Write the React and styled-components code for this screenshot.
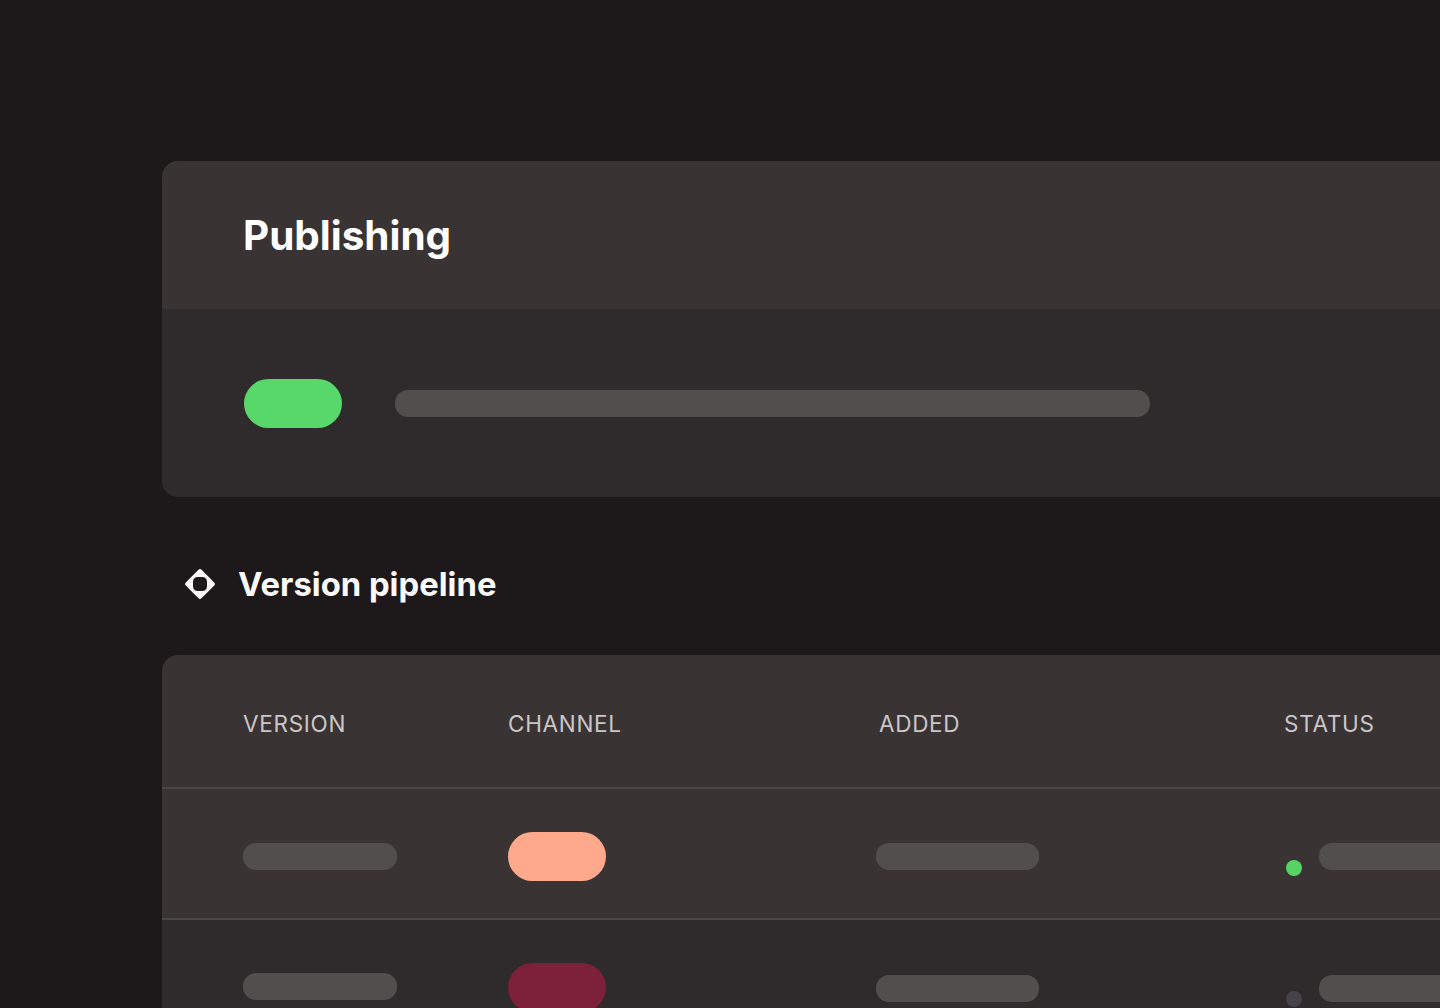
import styled, { createGlobalStyle } from "styled-components";

const GlobalStyle = createGlobalStyle`
  html, body {
    margin: 0;
    background: #1d191a;
    font-family: Inter, "Liberation Sans", sans-serif;
  }
`;

const Page = styled.div`
  box-sizing: border-box;
  height: 1008px;
  overflow: hidden;
  padding: 161px 0 0 162px;
`;

const Card = styled.section`
  width: 1500px;
  border-radius: 16px;
  overflow: hidden;
  background: #2f2a2c;
`;

const CardHeader = styled.header`
  display: flex;
  align-items: center;
  box-sizing: border-box;
  height: 148px;
  padding: 2px 0 0 81px;
  background: #393334;
`;

const Title = styled.h1`
  margin: 0;
  font-size: 40.4px;
  font-weight: 700;
  line-height: 48px;
  color: #ffffff;
`;

const CardBody = styled.div`
  display: flex;
  align-items: center;
  gap: 53px;
  box-sizing: border-box;
  height: 188px;
  padding: 0 0 0 82px;
`;

const Pill = styled.span`
  display: block;
  flex: none;
  width: 98px;
  height: 49px;
  border-radius: 24.5px;
  background: ${(p) => p.$color};
`;

const Skeleton = styled.span`
  display: block;
  flex: none;
  width: ${(p) => p.$width}px;
  height: 27px;
  margin-top: ${(p) => p.$top || 0}px;
  border-radius: 13px;
  background: #534e4e;
`;

const SectionHeading = styled.div`
  display: flex;
  align-items: center;
  gap: 23px;
  box-sizing: border-box;
  height: 158px;
  padding: 16px 0 0 23px;
`;

const SectionTitle = styled.h2`
  margin: 0;
  font-size: 32.8px;
  font-weight: 700;
  line-height: 40px;
  color: #fbf8f9;
`;

const DiamondIcon = styled.svg`
  flex: none;
  width: 30px;
  height: 30px;
  fill: #fbf8f9;
`;

const Table = styled.section`
  width: 1500px;
  border-radius: 16px 16px 0 0;
  overflow: hidden;
  background: #393334;
`;

const HeadRow = styled.div`
  display: grid;
  grid-template-columns: 265px 371px 405px 1fr;
  align-items: center;
  box-sizing: border-box;
  height: 134px;
  padding: 4px 0 0 81px;
  border-bottom: 2px solid #4b4646;
`;

const HeadCell = styled.span`
  font-size: 22.5px;
  font-weight: 400;
  letter-spacing: 0.7px;
  color: #cbc7c7;
`;

const Row = styled.div`
  display: grid;
  grid-template-columns: 265px 368px 443px 1fr;
  box-sizing: border-box;
  height: 131px;
  padding: 43px 0 0 81px;
  background: ${(p) => p.$bg};
  border-bottom: 2px solid #4b4646;
`;

const Status = styled.div`
  display: flex;
  align-items: flex-start;
  gap: 17px;
`;

const Dot = styled.span`
  flex: none;
  width: 16px;
  height: 16px;
  margin-top: ${(p) => p.$top}px;
  margin-left: -33px;
  border-radius: 50%;
  background: ${(p) => p.$color};
`;

const rows = [
  { bg: "#393334", channel: "#ffa98c", dot: "#56d364", version: 11, added: 11, status: 11, dotTop: 28 },
  { bg: "#2f2a2c", channel: "#7d2039", dot: "#46424a", version: 10, added: 12, status: 12, dotTop: 28 },
];

const columns = ["VERSION", "CHANNEL", "ADDED", "STATUS"];

export default function App() {
  return (
    <Page>
      <GlobalStyle />
      <Card>
        <CardHeader>
          <Title>Publishing</Title>
        </CardHeader>
        <CardBody>
          <Pill $color="#58d76b" />
          <Skeleton $width={755} />
        </CardBody>
      </Card>
      <SectionHeading>
        <DiamondIcon viewBox="0 0 30 30">
          <path
            fillRule="evenodd"
            d="M13.2 1a2.5 2.5 0 0 1 3.6 0L29 13.2a2.5 2.5 0 0 1 0 3.6L16.8 29a2.5 2.5 0 0 1-3.6 0L1 16.8a2.5 2.5 0 0 1 0-3.6ZM12.5 8h5A4.5 4.5 0 0 1 22 12.5v5a4.5 4.5 0 0 1-4.5 4.5h-5A4.5 4.5 0 0 1 8 17.5v-5A4.5 4.5 0 0 1 12.5 8Z"
          />
        </DiamondIcon>
        <SectionTitle>Version pipeline</SectionTitle>
      </SectionHeading>
      <Table>
        <HeadRow>
          {columns.map((c) => (
            <HeadCell key={c}>{c}</HeadCell>
          ))}
        </HeadRow>
        {rows.map((r) => (
          <Row key={r.channel} $bg={r.bg}>
            <Skeleton $width={154} $top={r.version} />
            <Pill $color={r.channel} />
            <Skeleton $width={163} $top={r.added} />
            <Status>
              <Dot $color={r.dot} $top={r.dotTop} />
              <Skeleton $width={300} $top={r.status} />
            </Status>
          </Row>
        ))}
      </Table>
    </Page>
  );
}
